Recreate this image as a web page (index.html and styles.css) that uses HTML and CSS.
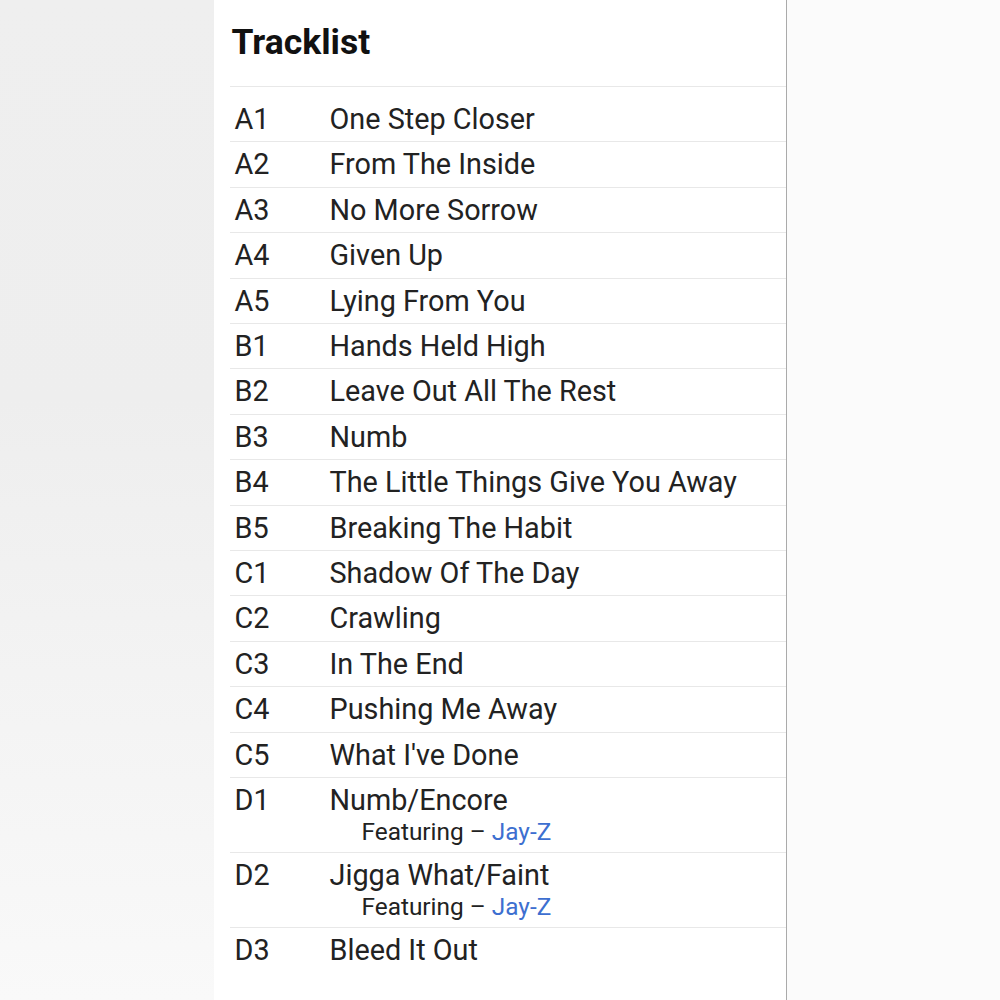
FILE: index.html
```html
<!DOCTYPE html>
<html lang="en">
<head>
  <meta charset="UTF-8">
  <title>Tracklist</title>
  <meta name="viewport" content="width=device-width, initial-scale=1.0">
  <link rel="stylesheet" href="styles.css">
</head>
<body>

<div class="page">
  <div class="panel">
    <h2 class="title">Tracklist</h2>

    <ul class="tracklist">
      <li class="track"><span class="pos">A1</span><div class="info"><span class="name">One Step Closer</span></div></li>
      <li class="track"><span class="pos">A2</span><div class="info"><span class="name">From The Inside</span></div></li>
      <li class="track"><span class="pos">A3</span><div class="info"><span class="name">No More Sorrow</span></div></li>
      <li class="track"><span class="pos">A4</span><div class="info"><span class="name">Given Up</span></div></li>
      <li class="track"><span class="pos">A5</span><div class="info"><span class="name">Lying From You</span></div></li>
      <li class="track"><span class="pos">B1</span><div class="info"><span class="name">Hands Held High</span></div></li>
      <li class="track"><span class="pos">B2</span><div class="info"><span class="name">Leave Out All The Rest</span></div></li>
      <li class="track"><span class="pos">B3</span><div class="info"><span class="name">Numb</span></div></li>
      <li class="track"><span class="pos">B4</span><div class="info"><span class="name">The Little Things Give You Away</span></div></li>
      <li class="track"><span class="pos">B5</span><div class="info"><span class="name">Breaking The Habit</span></div></li>
      <li class="track"><span class="pos">C1</span><div class="info"><span class="name">Shadow Of The Day</span></div></li>
      <li class="track"><span class="pos">C2</span><div class="info"><span class="name">Crawling</span></div></li>
      <li class="track"><span class="pos">C3</span><div class="info"><span class="name">In The End</span></div></li>
      <li class="track"><span class="pos">C4</span><div class="info"><span class="name">Pushing Me Away</span></div></li>
      <li class="track"><span class="pos">C5</span><div class="info"><span class="name">What I've Done</span></div></li>
      <li class="track">
        <span class="pos">D1</span>
        <div class="info">
          <span class="name">Numb/Encore</span>
          <span class="credit">Featuring – <a href="#">Jay-Z</a></span>
        </div>
      </li>
      <li class="track">
        <span class="pos">D2</span>
        <div class="info">
          <span class="name">Jigga What/Faint</span>
          <span class="credit">Featuring – <a href="#">Jay-Z</a></span>
        </div>
      </li>
      <li class="track"><span class="pos">D3</span><div class="info"><span class="name">Bleed It Out</span></div></li>
    </ul>
  </div>
</div>

</body>
</html>
```

FILE: styles.css
```css
html, body {
  height: 100%;
}

body {
  margin: 0;
  font-family: Roboto, "Noto Sans", Arial, sans-serif;
  color: #222;
  background:
    linear-gradient(to right, transparent 50%, #fbfbfb 50%),
    linear-gradient(to top, #f9f9f9, #eeeeee 60%, #efefef);
  overflow: hidden;
}

.page {
  display: flex;
  justify-content: center;
  min-height: 100%;
}

.panel {
  width: 556px;
  background: #fff;
  border-right: 1px solid #aaa;
  padding: 0 0 0 16px;
}

.title {
  margin: 0;
  padding: 21px 0 0 2px;
  height: 87px;
  box-sizing: border-box;
  font-size: 35.5px;
  line-height: 42px;
  font-weight: 700;
  color: #111;
  border-bottom: 1px solid #e8e8e8;
}

.tracklist {
  list-style: none;
  margin: 0;
  padding: 10px 0 0 0;
}

.track {
  display: flex;
  padding: 5px 0 5px 5px;
  border-bottom: 1px solid #e8e8e8;
  font-size: 28.8px;
  line-height: 34.4px;
}

.track:last-child {
  border-bottom: none;
}

.pos {
  width: 95px;
  flex-shrink: 0;
}

.info {
  display: flex;
  flex-direction: column;
}

.credit {
  padding: 0 0 1.6px 32px;
  font-size: 24.4px;
  line-height: 28px;
}

.credit a {
  color: #3d6fd0;
  text-decoration: none;
}
```
